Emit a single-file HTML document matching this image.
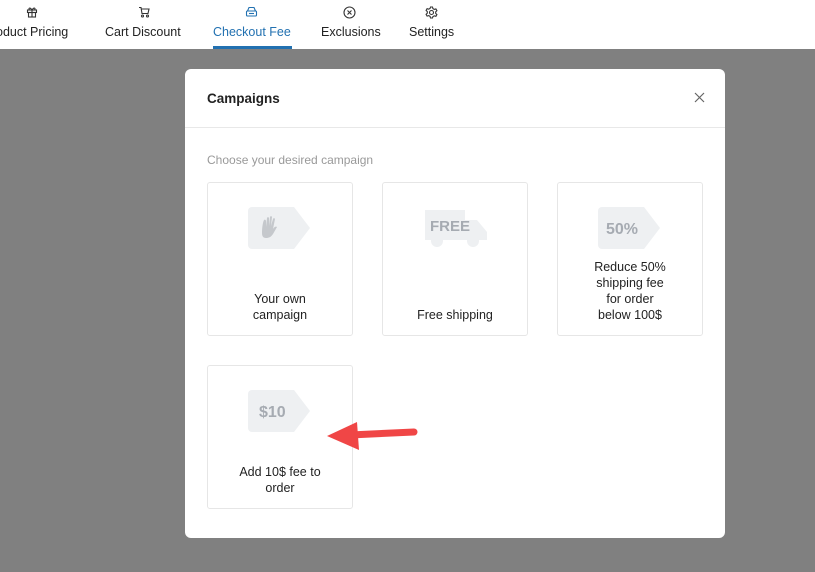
<!DOCTYPE html><html><head><style>
body{margin:0;width:815px;height:572px;background:#808080;font-family:"Liberation Sans",sans-serif;position:relative;overflow:hidden}
.top{position:absolute;left:0;top:0;width:815px;height:49px;background:#fff}
.tab{position:absolute;top:25px;font-size:12.5px;color:#222;white-space:nowrap}
.ic{position:absolute;top:6px}
.modal{position:absolute;left:185px;top:69px;width:540px;height:469px;background:#fff;border-radius:6px}
.card{position:absolute;width:144px;border:1px solid #e6e6e6;border-radius:3px;background:#fff;text-align:center;font-size:12.5px;color:#222;line-height:16px}
.card svg{position:absolute;left:40px;top:24px}
.lbl{position:absolute;left:0;right:0;bottom:12px}
</style></head><body>
<div class="top">
<svg class="ic" style="left:26px" width="12" height="12" viewBox="0 0 12 12" fill="none" stroke="#333" stroke-width="1.1"><rect x="1.5" y="4" width="9" height="2.5"/><rect x="2.5" y="6.5" width="7" height="4.5"/><path d="M6 4v7M6 4C4 1 2 2 3.5 4M6 4c2-3 4-2 2.5 0"/></svg>
<div class="tab" style="left:-4px">oduct Pricing</div>
<svg class="ic" style="left:138px" width="12" height="12" viewBox="0 0 12 12" fill="none" stroke="#333" stroke-width="1.1"><path d="M1 1.5h2l1 6h6l1-4.5H3.5"/><circle cx="4.5" cy="10" r="1"/><circle cx="9.5" cy="10" r="1"/></svg>
<div class="tab" style="left:105px">Cart Discount</div>
<svg class="ic" style="left:245px" width="13" height="12" viewBox="0 0 13 12" fill="none" stroke="#2271b1" stroke-width="1.1"><path d="M2.5 5L4 1.5h5L10.5 5"/><rect x="1.5" y="5" width="10" height="5" rx="1"/><path d="M4 7.5h5"/></svg>
<div class="tab" style="left:213px;color:#2271b1">Checkout Fee</div>
<div style="position:absolute;left:213px;top:46px;width:79px;height:3px;background:#2271b1"></div>
<svg class="ic" style="left:343px" width="13" height="13" viewBox="0 0 13 13" fill="none" stroke="#333" stroke-width="1.1"><circle cx="6.5" cy="6.5" r="5.5"/><path d="M4.5 4.5l4 4M8.5 4.5l-4 4"/></svg>
<div class="tab" style="left:321px">Exclusions</div>
<svg class="ic" style="left:425px" width="13" height="13" viewBox="0 0 13 13" fill="none" stroke="#333" stroke-width="1.1"><circle cx="6.5" cy="6.5" r="2"/><path d="M5.5 1h2l.4 1.6 1.4.8 1.6-.5 1 1.7-1.2 1.2v1.6l1.2 1.2-1 1.7-1.6-.5-1.4.8L7.5 12h-2l-.4-1.6-1.4-.8-1.6.5-1-1.7 1.2-1.2V5.6L1.1 4.4l1-1.7 1.6.5 1.4-.8z"/></svg>
<div class="tab" style="left:409px">Settings</div>
</div>
<div class="modal">
<div style="position:absolute;left:22px;top:22px;font-size:13.5px;color:#222;font-weight:bold">Campaigns</div>
<svg style="position:absolute;right:20px;top:23px" width="11" height="11" viewBox="0 0 11 11" stroke="#666" stroke-width="1.2"><path d="M1 1l9 9M10 1l-9 9"/></svg>
<div style="position:absolute;left:0;right:0;top:58px;height:1px;background:#e8e8e8"></div>
<div style="position:absolute;left:22px;top:84px;font-size:12px;color:#999">Choose your desired campaign</div>
<div class="card" style="left:22px;top:113px;height:152px">
<svg width="64" height="44" viewBox="0 0 64 44"><path d="M4 0h42l16 21-16 21H4a4 4 0 0 1-4-4V4a4 4 0 0 1 4-4z" fill="#eef0f2"/><path d="M14 26c0-6 1-11 2-13 1-1 2 0 2 1v6l1-9c0-1 2-1 2 0v8l1-9c0-1 2-1 2 0l-1 9 2-7c0-1 2-1 2 0l-2 10c1-2 3-3 4-2l-4 7c-2 3-4 4-7 4-3 0-4-2-4-5z" fill="#c5c8cc"/></svg>
<div class="lbl">Your own<br>campaign</div></div>
<div class="card" style="left:197px;top:113px;height:152px">
<svg width="64" height="44" viewBox="0 0 64 44"><path d="M2 3h40v10h12l10 12v8H2z" fill="#eef0f2"/><circle cx="14" cy="34" r="6" fill="#eef0f2"/><circle cx="50" cy="34" r="6" fill="#eef0f2"/><text x="7" y="24" font-family="Liberation Sans" font-weight="bold" font-size="15" fill="#a6abb2">FREE</text></svg>
<div class="lbl">Free shipping</div></div>
<div class="card" style="left:372px;top:113px;height:152px">
<svg width="64" height="44" viewBox="0 0 64 44"><path d="M4 0h42l16 21-16 21H4a4 4 0 0 1-4-4V4a4 4 0 0 1 4-4z" fill="#eef0f2"/><text x="8" y="27" font-family="Liberation Sans" font-weight="bold" font-size="16" fill="#a6abb2">50%</text></svg>
<div class="lbl">Reduce 50%<br>shipping fee<br>for order<br>below 100$</div></div>
<div class="card" style="left:22px;top:296px;height:142px">
<svg width="64" height="44" viewBox="0 0 64 44"><path d="M4 0h42l16 21-16 21H4a4 4 0 0 1-4-4V4a4 4 0 0 1 4-4z" fill="#eef0f2"/><text x="11" y="27" font-family="Liberation Sans" font-weight="bold" font-size="16" fill="#a6abb2">$10</text></svg>
<div class="lbl">Add 10$ fee to<br>order</div></div>
</div>
<svg style="position:absolute;left:320px;top:415px" width="110" height="40" viewBox="0 0 110 40"><path d="M94 17L30 20" stroke="#f04646" stroke-width="7" stroke-linecap="round"/><path d="M7 21L37 7l2 28z" fill="#f04646"/></svg>
</body></html>
